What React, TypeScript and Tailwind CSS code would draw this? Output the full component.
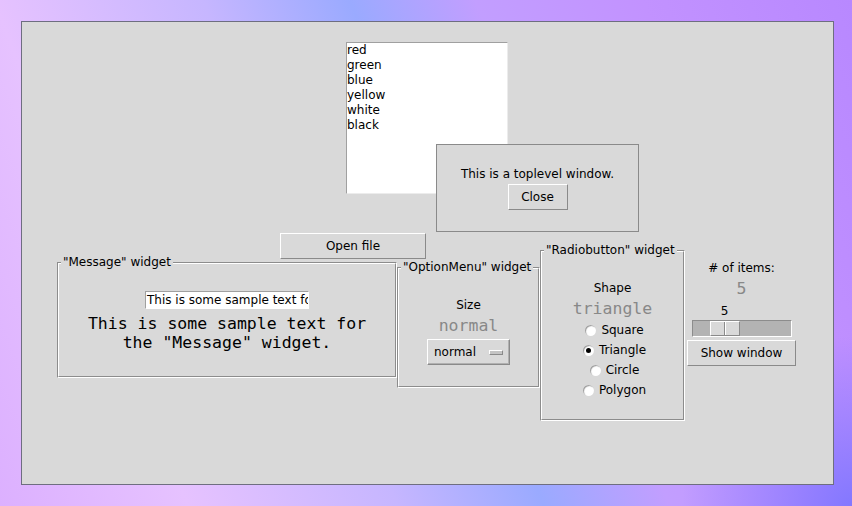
import React from "react"

const sans = "font-['DejaVu_Sans','Liberation_Sans',sans-serif]"
const mono = "font-['DejaVu_Sans_Mono','Liberation_Mono',monospace]"
const raised = "border border-t-white border-l-white border-b-[#8a8a8a] border-r-[#8a8a8a] bg-[#d9d9d9]"

const colors = ["red", "green", "blue", "yellow", "white", "black"]
const shapes = [
  { name: "Square", checked: false },
  { name: "Triangle", checked: true },
  { name: "Circle", checked: false },
  { name: "Polygon", checked: false },
]

function GrooveFrame({
  label,
  className,
  children,
}: {
  label: string
  className: string
  children: React.ReactNode
}) {
  return (
    <div className={`relative shrink-0 border border-t-[#8c8c8c] border-l-[#8c8c8c] border-b-white border-r-white ${className}`}>
      <div className="h-full flex flex-col items-center border border-t-white border-l-white border-b-[#8c8c8c] border-r-[#8c8c8c]">
        {children}
      </div>
      <span className="absolute left-[3px] top-[-8px] px-[2px] bg-[#d9d9d9] text-[12px] leading-[15px] whitespace-nowrap">
        {label}
      </span>
    </div>
  )
}

function Radio({ name, checked }: { name: string; checked: boolean }) {
  return (
    <div className="h-[20px] flex items-center gap-[5px]">
      <span className="w-[11px] h-[11px] rounded-full bg-white shadow-[inset_1px_1px_1px_#9a9a9a] flex items-center justify-center">
        {checked && <span className="w-[5px] h-[5px] rounded-full bg-black" />}
      </span>
      <span className="text-[12px] leading-[15px]">{name}</span>
    </div>
  )
}

export default function App() {
  return (
    <div
      className={`w-[852px] h-[506px] overflow-hidden pt-[21px] pl-[21px] text-black ${sans} bg-[image:radial-gradient(circle_at_100%_100%,rgba(128,118,255,0.95),rgba(128,118,255,0)_170px),linear-gradient(69deg,#dcb0ff_0%,#e6c2ff_18%,#c6b6ff_38%,#9aaaff_52%,#c29eff_64%,#c292ff_80%,#b888ff_100%)]`}
    >
      <div className="relative w-[813px] h-[464px] border border-[#6e6e80] bg-[#d9d9d9] flex flex-col">
        {/* listbox */}
        <div className="self-start ml-[324px] mt-[20px] w-[162px] h-[152px] bg-white border border-t-[#a0a0a0] border-l-[#a0a0a0] border-b-[#ececec] border-r-[#ececec] text-[12px] leading-[15px]">
          {colors.map((c) => (
            <div key={c}>{c}</div>
          ))}
        </div>

        {/* open file */}
        <button className={`mt-[39px] ml-[258px] w-[146px] h-[26px] text-[12px] leading-[15px] ${raised}`}>
          Open file
        </button>

        {/* widgets row */}
        <div className="mt-[-9px] ml-[35px] flex items-start">
          <GrooveFrame label={'"Message" widget'} className="w-[340px] h-[116px] mt-[12px]">
            <div className="mt-[27px] w-[164px] h-[18px] bg-white overflow-hidden whitespace-nowrap border border-t-[#a0a0a0] border-l-[#a0a0a0] border-b-white border-r-white pl-[1px] text-[12px] leading-[16px]">
              This is some sample text for the "Message" widget.
            </div>
            <div className={`mt-[5px] text-center text-[16.5px] leading-[19px] ${mono}`}>
              This is some sample text for
              <br />
              the "Message" widget.
            </div>
          </GrooveFrame>

          <GrooveFrame label={'"OptionMenu" widget'} className="w-[143px] h-[121px] mt-[17px]">
            <div className="mt-[29px] text-[12px] leading-[15px]">Size</div>
            <div className={`mt-[3px] text-[16.5px] leading-[19px] text-[#888888] ${mono}`}>normal</div>
            <div className={`mt-[4px] w-[83px] h-[26px] flex items-center justify-between px-[6px] shadow-[inset_-1px_-1px_0_#b0b0b0] ${raised}`}>
              <span className="text-[12px] leading-[15px]">normal</span>
              <span className="w-[14px] h-[5px] bg-[#c4c4c4] border border-t-white border-l-white border-b-[#8a8a8a] border-r-[#8a8a8a]" />
            </div>
          </GrooveFrame>

          <GrooveFrame label={'"Radiobutton" widget'} className="w-[145px] h-[171px]">
            <div className="mt-[29px] text-[12px] leading-[15px]">Shape</div>
            <div className={`mt-[3px] text-[16.5px] leading-[19px] text-[#888888] ${mono}`}>triangle</div>
            <div className="mt-[2px] ml-[4px] flex flex-col items-center">
              {shapes.map((s) => (
                <Radio key={s.name} name={s.name} checked={s.checked} />
              ))}
            </div>
          </GrooveFrame>

          <div className="ml-[2px] mt-[11px] w-[109px] flex flex-col items-center">
            <div className="text-[12px] leading-[15px]">
              # of items:
            </div>
            <div className={`mt-[3px] text-[16.5px] leading-[19px] text-[#888888] ${mono}`}>5</div>
            <div className="mt-[6px] ml-[-34px] text-[12px] leading-[15px]">5</div>
            <div className="mt-[1px] w-[100px] h-[17px] bg-[#b3b3b3] border border-t-[#8c8c8c] border-l-[#8c8c8c] border-b-white border-r-white flex">
              <div className={`ml-[17px] w-[30px] h-full flex justify-center ${raised}`}>
                <span className="w-[1px] h-full bg-[#8a8a8a]" />
                <span className="w-[1px] h-full bg-white" />
              </div>
            </div>
            <button className={`mt-[3px] w-[109px] h-[26px] text-[12px] leading-[15px] ${raised}`}>
              Show window
            </button>
          </div>
        </div>

        {/* toplevel window */}
        <div className="absolute left-[414px] top-[122px] w-[203px] h-[88px] border border-[#8a8a8a] bg-[#d9d9d9] flex flex-col items-center">
          <div className="mt-[22px] text-[12px] leading-[15px]">This is a toplevel window.</div>
          <button className={`mt-[2px] w-[60px] h-[26px] text-[12px] leading-[15px] ${raised}`}>
            Close
          </button>
        </div>
      </div>
    </div>
  )
}
